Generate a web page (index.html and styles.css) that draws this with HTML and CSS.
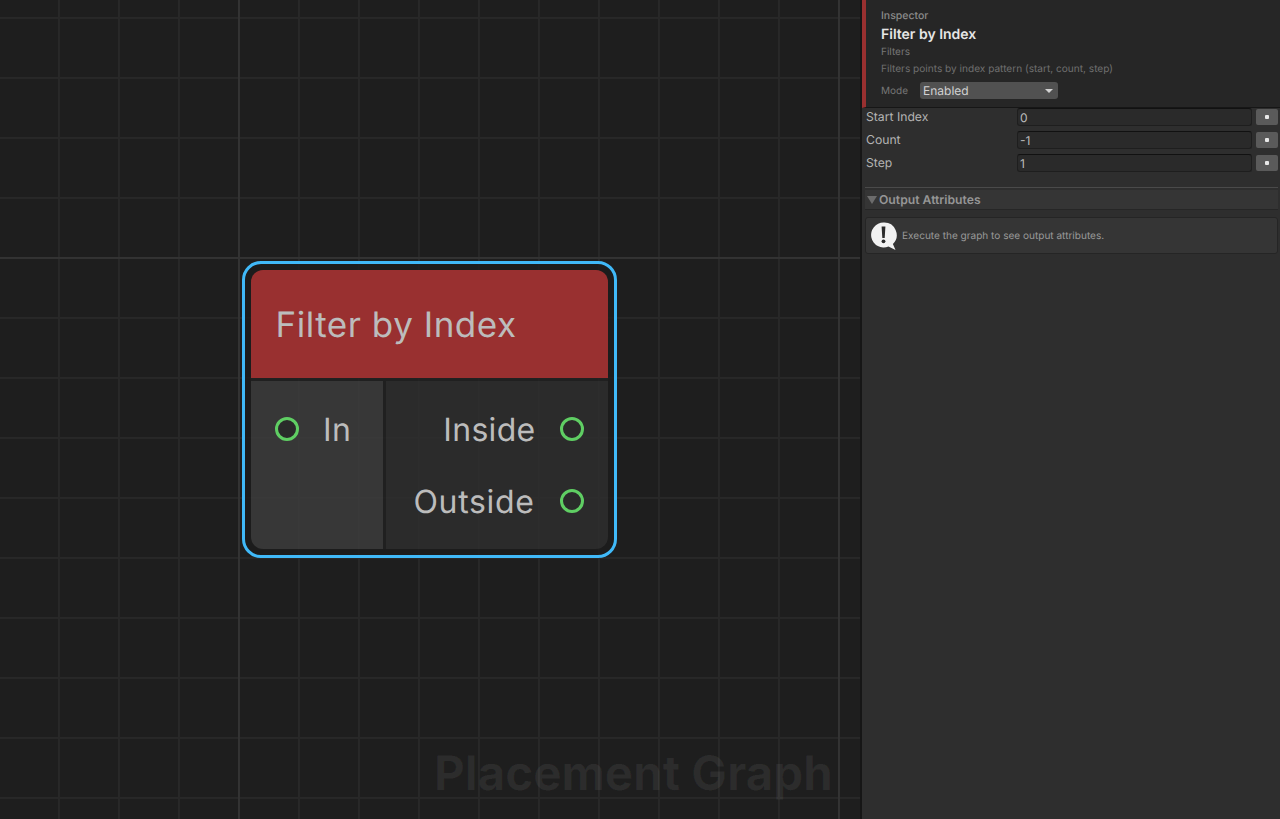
FILE: index.html
```html
<!DOCTYPE html>
<html lang="en">
<head>
<meta charset="utf-8">
<title>Placement Graph</title>
<link rel="stylesheet" href="styles.css">
</head>
<body>
<div class="app">
  <main class="canvas">
    <div class="grid-minor"></div>
    <div class="grid-major"></div>
    <div class="watermark">Placement Graph</div>
    <div class="node">
      <div class="node-inner">
        <div class="node-title">Filter by Index</div>
        <div class="node-body">
          <div class="ports-in">
            <div class="port port-in"><span class="pin"></span><span>In</span></div>
          </div>
          <div class="ports-out">
            <div class="port port-out"><span class="lbl-inside">Inside</span><span class="pin"></span></div>
            <div class="port port-out second"><span class="lbl-outside">Outside</span><span class="pin"></span></div>
          </div>
        </div>
      </div>
    </div>
  </main>
  <aside class="inspector">
    <header class="insp-head">
      <div class="insp-label">Inspector</div>
      <div class="insp-title">Filter by Index</div>
      <div class="insp-cat">Filters</div>
      <div class="insp-desc">Filters points by index pattern (start, count, step)</div>
      <div class="mode-row">
        <span class="mode-label">Mode</span>
        <div class="dropdown"><span>Enabled</span><span class="caret"></span></div>
      </div>
    </header>
    <section class="props">
      <div class="prop"><label>Start Index</label><div class="field">0</div><button class="dot-btn"><span></span></button></div>
      <div class="prop"><label>Count</label><div class="field">-1</div><button class="dot-btn"><span></span></button></div>
      <div class="prop"><label>Step</label><div class="field">1</div><button class="dot-btn"><span></span></button></div>
    </section>
    <div class="separator"></div>
    <div class="foldout"><span class="fold-caret"></span><span>Output Attributes</span></div>
    <div class="helpbox">
      <svg class="help-icon" width="27" height="29" viewBox="0 0 27 29">
        <path d="M12.5 0.5a12.5 12.5 0 1 0 5 24l7 3.6-2.6-6.2A12.5 12.5 0 0 0 12.5 0.5z" fill="#f2f2f2"/>
        <path d="M10.6 4.5h3.8l-.7 11.5h-2.4z" fill="#2b2b2b"/>
        <circle cx="12.5" cy="19.3" r="1.9" fill="#2b2b2b"/>
      </svg>
      <span>Execute the graph to see output attributes.</span>
    </div>
  </aside>
</div>
</body>
</html>
```
FILE: styles.css
```css
* { box-sizing: border-box; }
html, body { margin: 0; padding: 0; height: 100%; background: #1e1e1e; overflow: hidden; }
body { font-family: Inter, "Liberation Sans", sans-serif; text-rendering: geometricPrecision; }
.app { display: flex; width: 1280px; height: 819px; }

.canvas { position: relative; width: 860px; height: 819px; background: #1e1e1e; overflow: hidden; flex: none; }
.grid-minor, .grid-major { position: absolute; inset: 0; }
.grid-minor {
  background-image:
    linear-gradient(to right, #262626 0, #2a2a2a 1px, #242424 2px, transparent 2px),
    linear-gradient(to bottom, #262626 0, #2a2a2a 1px, #242424 2px, transparent 2px);
  background-size: 60px 60px;
  background-position: 58px 17px;
}
.grid-major {
  background-image:
    linear-gradient(to right, #303030 0, #363636 1px, #2e2e2e 2px, transparent 2px),
    linear-gradient(to bottom, #303030 0, #363636 1px, #2e2e2e 2px, transparent 2px);
  background-size: 600px 600px;
  background-position: 238px 257px;
}
.watermark {
  position: absolute; left: 434px; top: 746px;
  font-size: 47.5px; line-height: 56px; font-weight: 700;
  color: rgba(255,255,255,0.06); white-space: nowrap;
}

.node {
  position: absolute; left: 242px; top: 261px; width: 375px; height: 297px;
  border: 3px solid #40b9f8; border-radius: 19px;
  background: rgba(28,28,28,0.8); padding: 6px;
}
.node-inner { height: 100%; display: flex; flex-direction: column; border-radius: 12px; overflow: hidden; background: rgba(255,255,255,0.02); }
.node-title {
  height: 108px; background: #993030; color: #bcbcbc;
  font-size: 35px; letter-spacing: 0.53px; font-weight: 380; line-height: 110px; padding-left: 24.5px; flex: none;
}
.node-body { flex: 1; display: flex; gap: 3px; margin-top: 3px; font-size: 32px; letter-spacing: 0.3px; font-weight: 380; color: #bcbcbc; }
.ports-in { width: 132px; background: rgba(255,255,255,0.105); padding-top: 24px; }
.ports-out { flex: 1; background: rgba(255,255,255,0.05); padding-top: 24px; }
.port { display: flex; align-items: center; height: 48px; }
.port-in { padding-left: 24px; gap: 24px; }
.port-out { justify-content: flex-end; padding-right: 24px; gap: 24.5px; }
.second { margin-top: 24px; }
.lbl-outside { margin-right: 1px; letter-spacing: 0.65px; }
.pin { width: 24px; height: 24px; border: 3px solid #5fce63; border-radius: 50%; flex: none; background: #2a2a2a; }

.inspector { flex: 1; background: #2e2e2e; border-left: 2px solid #161616; color: #bdbdbd; display: flex; flex-direction: column; }
.insp-head { height: 108px; flex: none; background: #262626; border-left: 4px solid #993030; border-bottom: 1px solid #161616; padding: 9px 0 0 15px; color: #777; }
.insp-label { font-size: 10.5px; line-height: 13px; font-weight: 500; color: #8a8a8a; }
.insp-title { font-size: 14px; line-height: 16px; font-weight: 600; color: #e6e6e6; margin-top: 5px; }
.insp-cat { font-size: 10px; line-height: 12px; margin-top: 3px; color: #777; }
.insp-desc { font-size: 10.1px; line-height: 12px; margin-top: 5px; color: #6f6f6f; white-space: nowrap; }
.mode-row { display: flex; align-items: center; margin-top: 7px; }
.mode-label { font-size: 10px; width: 39px; color: #777; margin-top: 1px; }
.dropdown { width: 138px; height: 17px; background: #515151; border-radius: 3px; display: flex; align-items: center; justify-content: space-between; padding: 0 3px; font-size: 12px; color: #d2d2d2; }
.caret { width: 0; height: 0; border-left: 4px solid transparent; border-right: 4px solid transparent; border-top: 4px solid #d2d2d2; margin-right: 2px; }

.props { padding: 0 2px 0 4px; flex: none; }
.prop { display: flex; align-items: flex-start; height: 23px; font-size: 12.2px; line-height: 18px; color: #b4b4b4; }
.prop label { width: 151px; }
.field { width: 235px; height: 18px; background: #2a2a2a; border: 1px solid #1e1e1e; border-top-color: #111; border-radius: 3px; font-size: 12px; line-height: 17px; padding-left: 2px; color: #bcbcbc; }
.dot-btn { width: 22px; height: 16px; margin: 1px 0 0 4px; border: 0; padding: 0; background: #5a5a5a; border-radius: 2px; display: flex; align-items: center; justify-content: center; }
.dot-btn span { width: 4px; height: 4px; background: #e8e8e8; border-radius: 1px; }

.separator { margin: 10px 2px 0 3px; height: 1px; background: #4a4a4a; flex: none; }
.foldout { margin: 2px 2px 0 3px; height: 20px; flex: none; display: flex; align-items: center; gap: 2px; background: #353535; border-bottom: 1px solid #262626; font-size: 12.2px; font-weight: 600; color: #969696; padding-left: 2px; }
.fold-caret { width: 0; height: 0; border-left: 5px solid transparent; border-right: 5px solid transparent; border-top: 8px solid #6c6c6c; }
.helpbox { margin: 7px 2px 0 3px; height: 37px; flex: none; background: #353535; border: 1px solid #252525; border-radius: 3px; display: flex; align-items: center; gap: 4px; padding-left: 5px; font-size: 10.05px; color: #999; }
.help-icon { flex: none; margin-top: 1px; }
```
